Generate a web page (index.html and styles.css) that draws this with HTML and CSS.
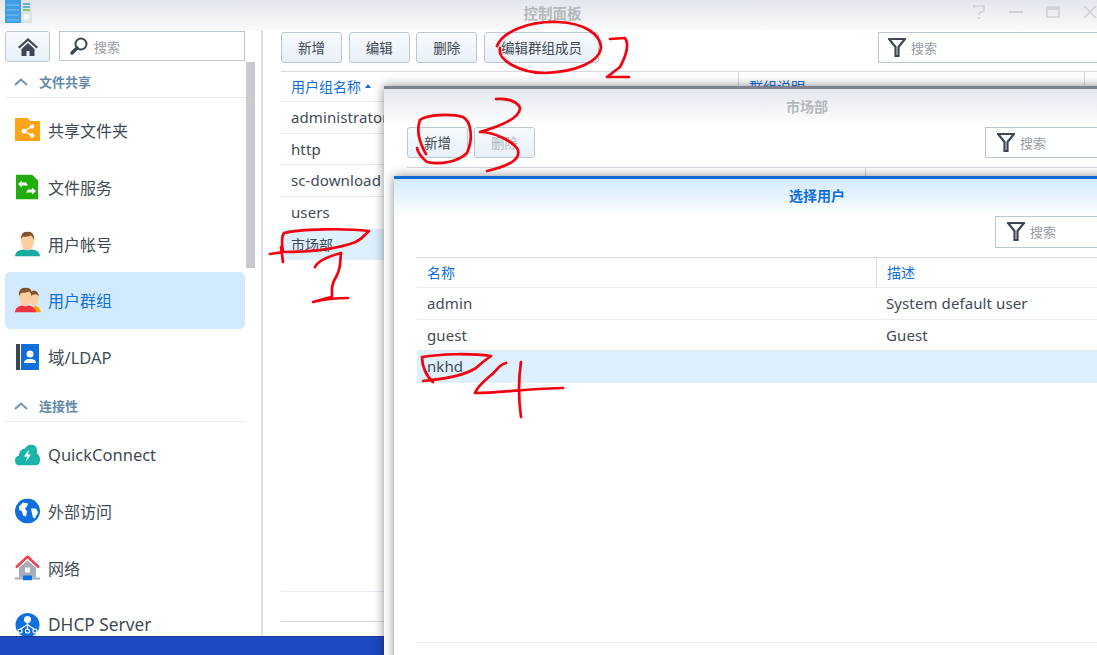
FILE: index.html
```html
<!DOCTYPE html>
<html lang="zh">
<head>
  <meta charset="UTF-8">
  <title>控制面板</title>
  <link rel="stylesheet" href="styles.css">
</head>
<body>
<div class="desktop">
  <div class="window">
    <div class="titlebar">
      <svg class="app-icon" width="28" height="24" viewBox="0 0 28 24">
        <rect x="0" y="0" width="16" height="23" fill="#3f9fe6"/>
        <path d="M2 5h12M2 10h12M2 15h12M2 20h12" stroke="#7cc4f2" stroke-width="1"/>
        <rect x="16" y="0" width="11" height="23" fill="#dfe3e6"/>
        <path d="M18 4h7M18 7h7" stroke="#4aa0c8" stroke-width="1.5"/>
        <path d="M18 10h7" stroke="#6cbf4b" stroke-width="1.5"/>
        <circle cx="21.5" cy="17" r="3" fill="#f4f6f8"/>
      </svg>
      <span class="title">控制面板</span>
      <div class="win-controls">
        <svg width="14" height="14" viewBox="0 0 14 14"><path d="M2 3V1h10v5L7 8v2M7 12v2" fill="none" stroke="#cfd2d6" stroke-width="1.6"/></svg>
        <svg width="14" height="14" viewBox="0 0 14 14"><path d="M0 7h14" stroke="#cfd2d6" stroke-width="2"/></svg>
        <svg width="14" height="14" viewBox="0 0 14 14"><path d="M1 2h12v10H1z" fill="none" stroke="#cfd2d6" stroke-width="1.6"/><path d="M1 3.5h12" stroke="#cfd2d6" stroke-width="3"/></svg>
        <svg width="14" height="14" viewBox="0 0 14 14"><path d="M1 1l12 12M13 1L1 13" stroke="#cfd2d6" stroke-width="1.6"/></svg>
      </div>
    </div>
    <div class="win-body">
      <aside class="sidebar">
        <div class="side-top">
          <button class="btn home-btn">
            <svg width="20" height="18" viewBox="0 0 20 18"><path d="M10 0L0 9l1.5 1.6L10 3l8.500 7.600L20 9zM3.500 11v7h5v-5h3v5h5v-7L10 5z" fill="#3e4753"/></svg>
          </button>
          <div class="search side-search">
            <svg width="20" height="20" viewBox="0 0 20 20"><circle cx="12" cy="8" r="5.500" fill="none" stroke="#3e4753" stroke-width="2"/><path d="M8 12l-5 5" stroke="#3e4753" stroke-width="3.500" stroke-linecap="round"/></svg>
            <span>搜索</span>
          </div>
        </div>
        <div class="scrollbar"></div>
        <div class="section-head first">
          <svg width="14" height="8" viewBox="0 0 14 8"><path d="M1 7l6-5.500L13 7" fill="none" stroke="#6f94b4" stroke-width="2"/></svg>
          <span>文件共享</span>
        </div>
        <div class="side-item">
          <svg width="25" height="24" viewBox="0 0 25 24"><path d="M0 0h13l2 3h10v20H0z" fill="#ffa414"/><g fill="#fff"><circle cx="9" cy="13" r="2.500"/><circle cx="17" cy="8.500" r="2.200"/><circle cx="17" cy="17.500" r="2.200"/></g><path d="M17 8.500L9 13l8 4.500" fill="none" stroke="#fff" stroke-width="1.200"/></svg>
          <span>共享文件夹</span>
        </div>
        <div class="side-item">
          <svg width="25" height="25" viewBox="0 0 25 25"><path d="M1 0h16l6 6v19H1z" fill="#23ad0c"/><path d="M11 8H7V6l-4 3.500L7 13v-2h6zM13 15h4v-2l4 3.500-4 3.500v-2h-6z" fill="#fff"/></svg>
          <span>文件服务</span>
        </div>
        <div class="side-item">
          <svg width="25" height="25" viewBox="0 0 25 25"><path d="M0 25q0-6 8-7h9q8 1 8 7z" fill="#15aca0"/><ellipse cx="12.500" cy="10" rx="6.500" ry="9" fill="#fbcf9f"/><path d="M6 9q-1-9 6.500-9T19 9q-1-4-3-5-6 2-8 1-2 1-2 4z" fill="#85532c"/></svg>
          <span>用户帐号</span>
        </div>
        <div class="side-item active">
          <svg width="26" height="25" viewBox="0 0 26 25"><path d="M17 25q0-5 3-7 5 1 6 7z" fill="#ffa414"/><ellipse cx="19" cy="11" rx="4.500" ry="7" fill="#fbcf9f"/><path d="M15 9q0-6 4-6t5 6q-2-3-5-2-2 0-4 2z" fill="#85532c"/><path d="M0 25q0-6 7-7h7q6 1 7 7z" fill="#ef3340"/><ellipse cx="10.500" cy="10" rx="6" ry="9" fill="#fbcf9f"/><path d="M4 9q-1-9 6.500-9T17 9q-1-4-3-5-5 2-7 1-2 1-3 4z" fill="#85532c"/></svg>
          <span>用户群组</span>
        </div>
        <div class="side-item">
          <svg width="25" height="26" viewBox="0 0 25 26"><rect x="1" y="0" width="4" height="26" fill="#3e4753"/><rect x="6" y="0" width="18" height="26" fill="#0f6fdc"/><circle cx="15" cy="10" r="3.500" fill="#fff"/><path d="M9 19q0-4 6-4t6 4z" fill="#fff"/></svg>
          <span class="latin">域/LDAP</span>
        </div>
        <div class="section-head">
          <svg width="14" height="8" viewBox="0 0 14 8"><path d="M1 7l6-5.500L13 7" fill="none" stroke="#6f94b4" stroke-width="2"/></svg>
          <span>连接性</span>
        </div>
        <div class="side-item">
          <svg width="25" height="21" viewBox="0 0 25 21"><path d="M5 21q-5 0-5-5 0-4 4-5 0-6 6-7 2-4 7-4 6 1 5 9 3 2 3 6 0 6-5 6z" fill="#1ab5a8"/><path d="M14 5l-5 7h3l-1 5 5-7h-3z" fill="#fff"/></svg>
          <span class="latin">QuickConnect</span>
        </div>
        <div class="side-item">
          <svg width="25" height="25" viewBox="0 0 25 25"><circle cx="12.500" cy="12.500" r="12.500" fill="#0f6fdc"/><path d="M4 8l4-4 5 1-1 3-2 2 2 3-1 5-3-1-1-4-3-2zM16 10l5 0 2 4-3 6-2-1-1-4z" fill="#fff"/></svg>
          <span>外部访问</span>
        </div>
        <div class="side-item">
          <svg width="25" height="25" viewBox="0 0 25 25"><path d="M12.500 5L4 12v10h17V12z" fill="#a6adb8"/><path d="M1 12L12.500 1 24 12" fill="none" stroke="#f0404a" stroke-width="2.500"/><rect x="10" y="12" width="5" height="5" fill="#fff"/><path d="M0 23h25" stroke="#a6adb8" stroke-width="2"/><rect x="8" y="20" width="9" height="5" rx="1" fill="#0f6fdc"/></svg>
          <span>网络</span>
        </div>
        <div class="side-item">
          <svg width="25" height="25" viewBox="0 0 25 25"><circle cx="12.500" cy="12.500" r="12" fill="#0f6fdc"/><circle cx="12.500" cy="7" r="3.500" fill="#fff"/><path d="M12.500 10v7M12.500 12L5 17M12.500 12l7 5" stroke="#fff" stroke-width="1.200"/><g fill="none" stroke="#fff" stroke-width="1.200"><circle cx="5" cy="18.500" r="2"/><circle cx="12.500" cy="18.500" r="2"/><circle cx="20" cy="18.500" r="2"/></g></svg>
          <span class="latin wide-latin">DHCP Server</span>
        </div>
      </aside>
      <main class="content">
        <div class="toolbar">
          <button class="btn">新增</button>
          <button class="btn">编辑</button>
          <button class="btn">删除</button>
          <button class="btn wide">编辑群组成员</button>
          <div class="search filter main-filter">
            <svg width="18" height="19" viewBox="0 0 18 19"><path d="M1 1h16l-6.500 8v9h-3V9z" fill="none" stroke="#3e4753" stroke-width="2.200"/></svg>
            <span>搜索</span>
          </div>
        </div>
        <div class="grid main-grid">
          <div class="row head"><div class="cell c1">用户组名称 <i class="sort"></i></div><div class="cell c2">群组说明</div><div class="cell c3"></div></div>
          <div class="row"><div class="cell c1 en">administrators</div></div>
          <div class="row"><div class="cell c1 en">http</div></div>
          <div class="row"><div class="cell c1 en">sc-download</div></div>
          <div class="row plain"><div class="cell c1 en">users</div></div>
          <div class="row selected"><div class="cell c1">市场部</div></div>
        </div>
        <div class="pager"></div>
      </main>
    </div>
  </div>
  <div class="taskbar"></div>

  <section class="dialog group-dialog">
    <div class="dialog-title">市场部</div>
    <div class="toolbar dialog-tools">
      <button class="btn">新增</button>
      <button class="btn muted">删除</button>
      <div class="search filter">
        <svg width="18" height="19" viewBox="0 0 18 19"><path d="M1 1h16l-6.500 8v9h-3V9z" fill="none" stroke="#3e4753" stroke-width="2.200"/></svg>
        <span>搜索</span>
      </div>
    </div>
    <div class="group-head"></div>
  </section>

  <section class="dialog user-dialog">
    <div class="dialog-title blue">选择用户</div>
    <div class="user-tools">
      <div class="search filter">
        <svg width="18" height="19" viewBox="0 0 18 19"><path d="M1 1h16l-6.500 8v9h-3V9z" fill="none" stroke="#3e4753" stroke-width="2.200"/></svg>
        <span>搜索</span>
      </div>
    </div>
    <div class="grid user-grid">
      <div class="row head"><div class="cell u1">名称</div><div class="cell u2">描述</div></div>
      <div class="row"><div class="cell u1 en">admin</div><div class="cell u2 en">System default user</div></div>
      <div class="row"><div class="cell u1 en">guest</div><div class="cell u2 en">Guest</div></div>
      <div class="row selected"><div class="cell u1 en">nkhd</div></div>
    </div>
    <div class="user-foot"></div>
  </section>

  <!-- red marks someone drew on the screenshot -->
  <svg class="marks" width="1097" height="655" viewBox="0 0 1097 655">
    <g fill="none" stroke="#f5000f" stroke-width="2.700" stroke-linecap="round" stroke-linejoin="round">
      <path d="M497 46C503 31 530 21 558 22C584 23 600 34 601 47C600 62 575 72 545 73C520 73 497 60 500 48"/>
      <path d="M610 39L625 38C629 44 627 54 620 67L607 77L629 77"/>
      <path d="M496 99C508 98 518 102 520 108C520 116 508 124 480 132C495 132 514 142 518 150C520 158 513 165 487 171"/>
      <path d="M426 154C418 140 417 128 420 120C425 115 450 113 463 117C472 122 473 140 467 153C458 162 440 165 427 162C422 158 418 153 417 148"/>
      <path d="M270 254L283 252C281 240 282 236 284 233C300 229 345 228 369 231C362 238 358 242 350 244C330 250 305 252 284 252"/>
      <path d="M283 262L281 247"/>
      <path d="M315 267C318 260 330 256 341 253C340 265 340 270 336 277C331 285 332 290 332 297C325 298 318 301 313 302C325 299 338 298 348 298"/>
      <path d="M422 357C440 354 470 353 491 356C484 361 480 364 476 368C465 375 445 379 423 381M422 357C422 366 426 376 433 382"/>
      <path d="M506 363C498 365 498 370 490 376C483 382 477 387 475 393C500 393 535 388 563 388"/>
      <path d="M521 362C519 375 518 395 521 417"/>
    </g>
  </svg>
</div>
</body>
</html>
```

FILE: styles.css
```css
* {
  box-sizing: border-box;
}
html, body {
  margin: 0;
  padding: 0;
  overflow: hidden;
}
body {
  font-family: "Noto Sans", "Noto Sans CJK SC", sans-serif;
  font-size: 14px;
  color: #414b55;
  background: #fff;
}
.desktop {
  position: relative;
  width: 1097px;
  height: 655px;
  overflow: hidden;
}
.window {
  height: 636px;
  display: flex;
  flex-direction: column;
  background: #fff;
}
.taskbar {
  height: 19px;
  background: #1d4ac2;
  border-top: 1px solid #1a3a94;
}
.titlebar {
  height: 31px;
  flex: none;
  display: flex;
  align-items: center;
  justify-content: center;
  position: relative;
  background: linear-gradient(#e3e6ec, #fafbfc);
}
.app-icon {
  position: absolute;
  left: 5px;
  top: 0;
}
.title {
  font-size: 14.500px;
  font-weight: 700;
  color: #b4b8bc;
  margin-top: -7px;
  margin-left: 8px;
}
.win-controls {
  position: absolute;
  right: 0;
  top: 5px;
  display: flex;
  gap: 23px;
}
.win-body {
  flex: 1;
  display: flex;
  min-height: 0;
}
.sidebar {
  width: 263px;
  flex: none;
  padding-left: 5px;
  border-right: 2px solid #dcdfe3;
  position: relative;
  overflow: hidden;
}
.side-top {
  display: flex;
  gap: 9px;
  height: 31px;
}
.btn {
  font: inherit;
  font-size: 13.500px;
  color: #3e4753;
  width: 61px;
  height: 31px;
  flex: none;
  padding: 0 0 2px;
  border: 1px solid #bcc7d4;
  border-radius: 3px;
  background: linear-gradient(#f8fbff, #e9f0f8);
}
.btn.wide {
  width: 115px;
}
.btn.muted {
  color: #b0b6bd;
}
.home-btn {
  width: 45px;
  padding: 0;
  display: flex;
  align-items: center;
  justify-content: center;
}
.search {
  display: flex;
  align-items: center;
  gap: 5px;
  height: 30px;
  border: 1px solid #bcc7d4;
  background: #fff;
  color: #969da5;
  font-size: 13px;
  padding-left: 9px;
}
.side-search {
  width: 186px;
}
.scrollbar {
  position: absolute;
  left: 246px;
  top: 31px;
  width: 9px;
  height: 206px;
  background: #c8cacd;
}
.section-head {
  width: 240px;
  height: 37px;
  padding: 12px 0 0 9px;
  display: flex;
  align-items: flex-start;
  gap: 11px;
  border-bottom: 1px solid #e3e7ec;
  font-size: 13px;
  font-weight: 700;
  color: #6289a8;
  line-height: 18px;
}
.section-head svg {
  margin-top: 5px;
}
.section-head.first {
  height: 36px;
  padding-top: 11px;
}
.side-item {
  width: 240px;
  height: 56.700px;
  display: flex;
  align-items: center;
  padding-left: 10px;
  font-size: 16px;
  border-radius: 5px;
  position: relative;
}
.side-item svg {
  position: absolute;
  left: 10px;
  top: 50%;
  transform: translateY(-50%);
}
.side-item span {
  margin-left: 33px;
}
.section-head + .side-item {
  margin-top: 4px;
}
.side-item.active {
  background: #d2eafe;
  color: #0f6fdc;
}
.latin {
  font-size: 16.500px;
}
.wide-latin {
  font-size: 17.300px;
}
.content {
  flex: 1;
  padding-left: 18px;
  position: relative;
  min-width: 0;
}
.toolbar {
  display: flex;
  gap: 6.660px;
  height: 40px;
  align-items: flex-start;
  padding-top: 1px;
}
.filter {
  width: 230px;
  height: 31px;
  margin-left: auto;
  flex: none;
  padding-bottom: 1px;
}
.filter svg {
  flex: none;
}
.main-filter {
  margin-right: -11px;
}
.grid {
  border-top: 1px solid #d3dae3;
}
.row {
  display: flex;
  height: 31.700px;
  align-items: center;
  border-bottom: 1px solid #e6ebf2;
}
.row.plain {
  border-bottom: none;
}
.row.selected {
  background: #def0fe;
  border-bottom: none;
}
.row.head {
  height: 30px;
  color: #0f6fdc;
  font-size: 14px;
}
.cell {
  padding: 0 0 1px 10px;
  height: 100%;
  display: flex;
  align-items: center;
}
.head .cell {
  padding-bottom: 2px;
}
.selected .cell {
  padding-bottom: 2px;
}
.en {
  font-size: 15px;
  letter-spacing: 0.1px;
}
.c1 {
  width: 457px;
  white-space: nowrap;
  gap: 4px;
}
.head .c2 {
  border-left: 1px solid #d3dae3;
  width: 346px;
}
.head .c3 {
  border-left: 1px solid #d3dae3;
  flex: 1;
}
.sort {
  width: 0;
  height: 0;
  border: 3.500px solid transparent;
  border-top: none;
  border-bottom: 4px solid #0f6fdc;
}
.pager {
  position: absolute;
  left: 18px;
  right: 0;
  top: 560px;
  height: 31px;
  border-top: 1px solid #e6ebf2;
  border-bottom: 1px solid #cfd8e3;
}
.dialog {
  position: absolute;
  background: #fff;
  box-shadow: 0 0 10px rgba(0, 0, 0, 0.45);
}
.group-dialog {
  left: 384px;
  top: 86px;
  width: 730px;
  height: 580px;
  border-top: 3px solid #7c838d;
}
.dialog-title {
  height: 37px;
  padding: 9px 0 0 402px;
  line-height: 18px;
  font-size: 14px;
  font-weight: 700;
  color: #b4b8bc;
  background: linear-gradient(#e3e7ee, #fff);
}
.dialog-tools {
  height: 41px;
  padding-left: 23px;
  gap: 6px;
}
.dialog-tools .filter {
  margin-left: 444px;
  padding-left: 11px;
}
.group-head {
  margin-left: 23px;
  height: 10px;
  border-top: 1px solid #d3dae3;
  position: relative;
}
.group-head::after {
  content: "";
  position: absolute;
  left: 458px;
  top: 0;
  height: 9px;
  border-left: 1px solid #d3dae3;
}
.user-dialog {
  left: 394px;
  top: 176px;
  width: 720px;
  height: 490px;
  border-top: 3px solid #0a6ad8;
}
.dialog-title.blue {
  height: 38px;
  color: #0f6fdc;
  background: linear-gradient(#d4eafc, #fff);
  padding: 8px 0 0 395px;
}
.user-tools {
  display: flex;
  justify-content: flex-end;
  height: 40px;
}
.user-tools .filter {
  margin-right: -5px;
  width: 124px;
  height: 32px;
  margin-top: -1px;
  padding-left: 11px;
}
.user-grid {
  margin-left: 23px;
  border-top: 1px solid #d3dae3;
}
.u1 {
  width: 459px;
}
.u2 {
  flex: 1;
}
.head .u2 {
  border-left: 1px solid #d3dae3;
}
.user-foot {
  margin-left: 23px;
  margin-top: 259px;
  border-top: 1px solid #e6ebf2;
}
.marks {
  position: absolute;
  left: 0;
  top: 0;
  pointer-events: none;
}
```
